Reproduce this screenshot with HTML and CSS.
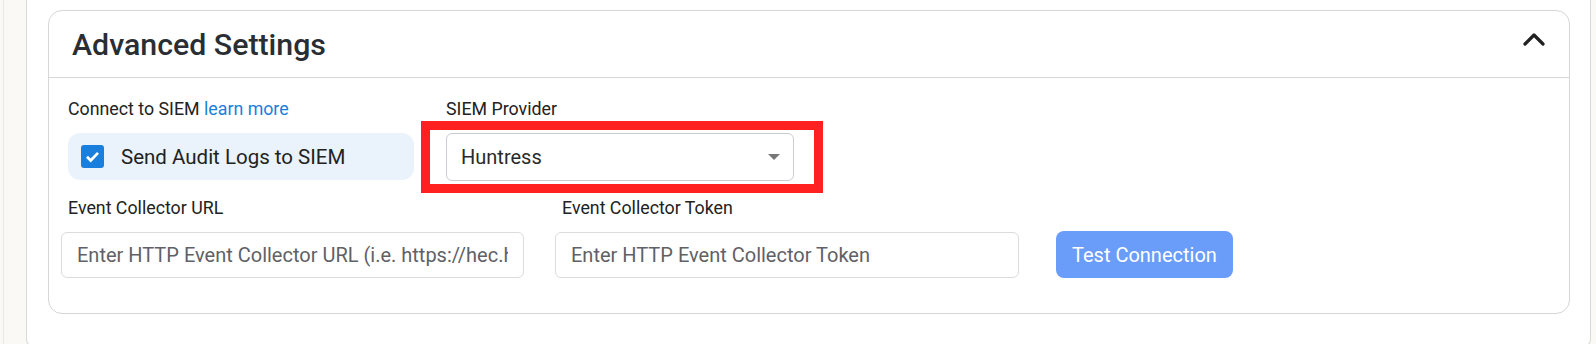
FILE: index.html
```html
<!DOCTYPE html>
<html>
<head>
    <title>Advanced Settings</title>
    <meta charset="utf-8">
    <link rel="stylesheet" href="styles.css">
</head>
<body>
    <div class="page-edge"></div>
    <div class="panel">
        <div class="settings-card">
            <div class="settings-header">
                <h2>Advanced Settings</h2>
                <svg class="chevron" width="24" height="14" viewBox="0 0 24 14">
                    <polyline points="3,12 12,3 21,12" fill="none" stroke="#222" stroke-width="3.2" stroke-linecap="round" stroke-linejoin="round"/>
                </svg>
            </div>

            <div class="settings-body">
                <div class="row row-top">
                    <div class="field field-siem">
                        <div class="field-label">Connect to SIEM <a href="#">learn more</a></div>
                        <label class="check-pill">
                            <span class="checkbox">
                                <svg width="17" height="17" viewBox="0 0 16 16">
                                    <polyline points="2.8,8.2 6.3,11.7 13.2,4.6" fill="none" stroke="#fff" stroke-width="2.6"/>
                                </svg>
                            </span>
                            Send Audit Logs to SIEM
                        </label>
                    </div>
                    <div class="field field-provider">
                        <div class="field-label">SIEM Provider</div>
                        <div class="select-wrap">
                            <div class="select">
                                <span>Huntress</span>
                                <span class="caret"></span>
                            </div>
                            <div class="highlight"></div>
                        </div>
                    </div>
                </div>

                <div class="row row-bottom">
                    <div class="field field-url">
                        <div class="field-label indent">Event Collector URL</div>
                        <input class="text-input" type="text" placeholder="Enter HTTP Event Collector URL (i.e. https://hec.hostname.com:8088)">
                    </div>
                    <div class="field field-token">
                        <div class="field-label indent">Event Collector Token</div>
                        <input class="text-input" type="text" placeholder="Enter HTTP Event Collector Token">
                    </div>
                    <button class="btn-test" disabled>Test Connection</button>
                </div>
            </div>
        </div>
    </div>
</body>
</html>
```

FILE: styles.css
```css
body {
    font-family: Roboto, 'Liberation Sans', sans-serif;
    background: #faf9f6;
    margin: 0;
    padding: 0 5px 0 26px;
    color: #222;
    position: relative;
}
.page-edge {
    position: absolute;
    left: 3px;
    top: 0;
    bottom: 0;
    border-left: 1px solid #ebe9e3;
}
.panel {
    background: white;
    border: 1px solid #d9d9d9;
    border-top: none;
    border-radius: 0 0 10px 10px;
    padding: 10px 20px 34px 21px;
}
.settings-card {
    border: 1px solid #d6d6d6;
    border-radius: 14px;
}
.settings-header {
    height: 66px;
    display: flex;
    justify-content: space-between;
    align-items: center;
    padding: 0 23px 0 23px;
    border-bottom: 1px solid #d6d6d6;
}
.settings-header h2 {
    margin: 0;
    font-size: 30.3px;
    font-weight: 500;
    color: #2a2e34;
}
.chevron {
    margin-bottom: 10px;
}
.settings-body {
    padding: 20px 12px 35px 12px;
}
.row {
    display: flex;
}
.row-top {
    padding-left: 7px;
    gap: 32px;
}
.row-bottom {
    margin-top: 16px;
    align-items: flex-end;
}
.field-label {
    font-size: 17.8px;
    line-height: 22px;
    color: #222;
    margin-bottom: 13px;
}
.field-label a {
    color: #1a7fdc;
    text-decoration: none;
}
.field-label.indent {
    padding-left: 7px;
    margin-bottom: 13px;
}
.field-siem {
    width: 346px;
}
.field-provider {
    width: 348px;
}
.check-pill {
    display: flex;
    align-items: center;
    height: 47px;
    background: #eaf2fb;
    border-radius: 12px;
    padding-left: 13px;
    font-size: 20.5px;
    color: #222;
}
.checkbox {
    width: 23px;
    height: 23px;
    background: #1a7fdc;
    border-radius: 3px;
    display: flex;
    align-items: center;
    justify-content: center;
    margin-right: 17px;
}
.select-wrap {
    position: relative;
}
.select {
    height: 46px;
    border: 1px solid #c9ccd1;
    border-radius: 6px;
    display: flex;
    align-items: center;
    justify-content: space-between;
    padding: 0 13px 0 14px;
    font-size: 20px;
    color: #2a2a2a;
}
.caret {
    width: 0;
    height: 0;
    border-left: 6px solid transparent;
    border-right: 6px solid transparent;
    border-top: 6px solid #777;
}
.highlight {
    position: absolute;
    left: -25px;
    right: -29px;
    top: -12px;
    bottom: -12px;
    border: 9px solid #ff2020;
}
.field-url {
    width: 463px;
}
.field-token {
    width: 464px;
    margin-left: 31px;
}
.text-input {
    display: block;
    box-sizing: border-box;
    width: 100%;
    height: 46px;
    border: 1px solid #dcdcdc;
    border-radius: 6px;
    padding: 0 15px;
    font-family: Roboto, 'Liberation Sans', sans-serif;
    font-size: 20px;
    color: #222;
    outline: none;
}
.text-input::placeholder {
    color: #5f6166;
}
.btn-test {
    margin-left: 37px;
    height: 47px;
    padding: 0 16px;
    background: #6a9cf9;
    color: white;
    border: none;
    border-radius: 8px;
    font-family: Roboto, 'Liberation Sans', sans-serif;
    font-size: 20px;
}
```
